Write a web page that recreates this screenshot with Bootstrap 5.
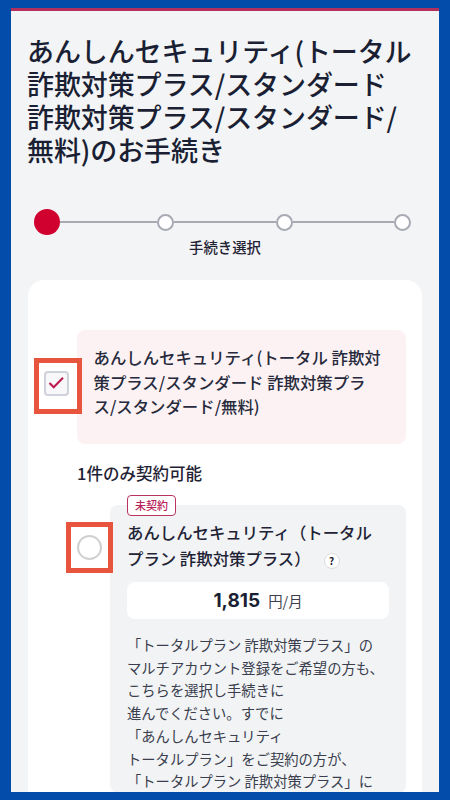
<!DOCTYPE html>
<html lang="ja">
<head>
<meta charset="utf-8">
<link href="https://cdn.jsdelivr.net/npm/bootstrap@5.3.0/dist/css/bootstrap.min.css" rel="stylesheet">
<style>
html,body{height:800px;overflow:hidden}
body{background:#034ca9;padding:8px 11px;font-family:"Noto Sans CJK JP","Noto Sans",sans-serif;color:#1f2335}
.screen{height:784px;overflow:hidden;background:#f3f4f6;border-top:3px solid #b32f5e;padding:0 17px}
.page-title{font-size:27px;line-height:33px;font-weight:500;color:#1a1f33;margin:23px 0 0 -1px;letter-spacing:-.1px}
.stepper{margin:43px 0 0 6px;height:26px;width:377px;align-items:center}
.step-line{flex:1;height:2px;background:#a8aab3}
.step-line-first{flex:none;width:97px}
.step-first{width:26px;height:26px;border-radius:50%;background:#d0002f;flex:none}
.step-dot{width:17px;height:17px;border-radius:50%;border:2px solid #a8aab3;background:#fff;flex:none}
.step-label{font-size:14.4px;line-height:20px;font-weight:500;margin-top:2px;text-align:center;width:394px}
.panel-card{background:#fff;border-radius:16px;margin-top:23px;height:560px;padding:50px 16px 0 49px;position:relative}
.pink-box{background:#fdf2f3;border-radius:8px;height:114px;padding:15px 0 0 16.5px;font-size:16.4px;line-height:24.5px;font-weight:500;color:#262a3c;white-space:nowrap}
.limit-note{font-size:16.5px;line-height:22px;font-weight:500;margin-top:18px}
.gray-box{background:#f1f3f5;border-radius:8px;margin:21px 0 0 33px;padding:14px 17px 0;position:relative}
.tag-new{position:absolute;left:17px;top:-10px;height:21px;width:49px;border:1px solid #b8345f;border-radius:4px;background:#fff;color:#b8205a;font-size:11px;line-height:19px;font-weight:500;text-align:center}
.plan-name{font-size:16.4px;line-height:26px;font-weight:500;margin:0}
.help-mark{display:inline-block;width:16px;height:16px;border-radius:50%;border:1px solid #ddd;background:#fff;font-size:10px;line-height:14px;font-weight:700;text-align:center;margin-left:13px;vertical-align:0}
.price-box{background:#fff;border-radius:8px;height:37px;margin-top:11px;align-items:center;justify-content:center;gap:8px;font-size:14.4px;color:#3b3f4e}
.price-num{font-family:Inter,"Noto Sans",sans-serif;font-weight:700;font-size:19px;color:#1a1f33;position:relative;top:1px}
.plan-text{font-size:14.3px;line-height:22.7px;color:#3a3e4d;margin:15px 0 0;white-space:nowrap}
.mark-box{position:absolute;border:5px solid #e8553f;background:#fff}
.mark-a{left:6px;top:78px;width:48px;height:56px}
.mark-b{left:38px;top:242px;width:47px;height:51px}
.check-ic{position:absolute;left:5px;top:8px;width:25px;height:25px;border:2px solid #cfd2da;border-radius:4px;background:#f8f8fa}
.radio-ic{position:absolute;left:6px;top:8px;width:25px;height:25px;border:2px solid #cfd0d2;border-radius:50%;background:#fff}
</style>
</head>
<body>
<div class="screen">
  <h1 class="page-title">あんしんセキュリティ(トータル<br>詐欺対策プラス/スタンダード<br>詐欺対策プラス/スタンダード/<br>無料)のお手続き</h1>
  <div class="stepper d-flex">
    <span class="step-first"></span><span class="step-line step-line-first"></span><span class="step-dot"></span><span class="step-line"></span><span class="step-dot"></span><span class="step-line"></span><span class="step-dot"></span>
  </div>
  <div class="step-label">手続き選択</div>
  <div class="panel-card">
    <div class="pink-box">あんしんセキュリティ(トータル 詐欺対<br>策プラス/スタンダード 詐欺対策プラ<br>ス/スタンダード/無料)</div>
    <div class="limit-note">1件のみ契約可能</div>
    <div class="gray-box">
      <span class="tag-new">未契約</span>
      <p class="plan-name">あんしんセキュリティ（トータル<br>プラン 詐欺対策プラス）<span class="help-mark">?</span></p>
      <div class="price-box d-flex"><span class="price-num">1,815</span><span>円/月</span></div>
      <p class="plan-text">「トータルプラン 詐欺対策プラス」の<br>マルチアカウント登録をご希望の方も、<br>こちらを選択し手続きに<br>進んでください。すでに<br>「あんしんセキュリティ<br>トータルプラン」をご契約の方が、<br>「トータルプラン 詐欺対策プラス」に</p>
    </div>
    <div class="mark-box mark-a"><span class="check-ic"><svg viewBox="0 0 21 21" width="21" height="21" class="d-block"><path d="M3.5 10l4.2 4.3L17 4.8" fill="none" stroke="#bd1d50" stroke-width="2.2"/></svg></span></div>
    <div class="mark-box mark-b"><span class="radio-ic"></span></div>
  </div>
</div>
</body>
</html>
